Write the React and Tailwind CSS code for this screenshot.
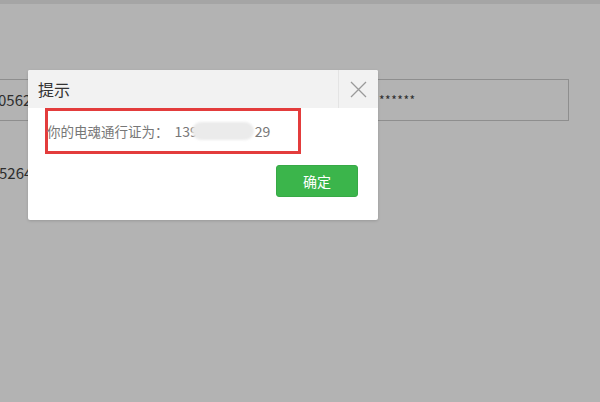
const FONT = "font-['Noto_Sans_CJK_SC','Noto_Sans',sans-serif]";

const CloseIcon = () => (
  <svg className="w-[17px] h-[17px] text-[#9a9a9a]" viewBox="0 0 17 17" fill="none" stroke="currentColor" strokeWidth={1.3}>
    <path d="M1 1l15 15M16 1L1 16" />
  </svg>
);

const Dialog = () => (
  <div className="absolute left-[28px] top-[70px] w-[350px] h-[150px] bg-white rounded-[2px] shadow-[0_1px_3px_rgba(0,0,0,0.15)] overflow-hidden">
    <div className="flex h-[38px] bg-[#f2f2f2]">
      <div className="flex-1 flex items-center pl-[10px] text-[16px] text-[#333]">提示</div>
      <div className="w-[40px] flex items-center justify-center border-l border-[#e4e4e4]">
        <CloseIcon />
      </div>
    </div>
    <div className="ml-[17px] w-[256px] h-[46px] border-[3px] border-[#e33c3c] flex items-center text-[13.5px] text-[#777] whitespace-nowrap">
      <span className="-ml-[1px]">你的电魂通行证为：</span>
      <span className="ml-[6px] text-[14px]">139</span>
      <span className="inline-block w-[62px] h-[18px] ml-[-6px] rounded-full bg-[#ebebeb] blur-[1px]" />
      <span className="ml-[1px] text-[14px]">29</span>
    </div>
    <div className="flex justify-end pr-[20px] mt-[11px]">
      <button className="w-[82px] h-[32px] bg-[#3bb54b] border border-[#37a946] rounded-[3px] text-white text-[14px]">
        确定
      </button>
    </div>
  </div>
);

export default function App() {
  return (
    <div className={`relative w-[600px] h-[402px] overflow-hidden bg-[#b3b3b3] ${FONT}`}>
      <div className="h-[4px] bg-[#a5a5a5]" />
      <div className="mt-[75px] ml-[-40px] w-[609px] h-[42px] border border-[#8e8e8e] flex items-center text-[15px] text-[#2e2e2e]">
        <span className="ml-[37px] w-[381px]">0562</span>
        <span className="text-[12px] tracking-[0.5px]">******</span>
      </div>
      <div className="mt-[42px] ml-[-1px] text-[15px] text-[#2e2e2e] leading-[20px]">5264</div>
      <Dialog />
    </div>
  );
}
